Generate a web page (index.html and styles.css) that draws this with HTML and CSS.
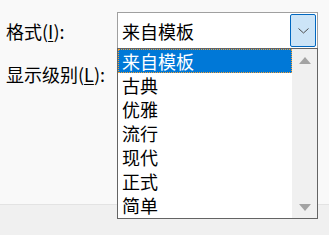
FILE: index.html
```html
<!DOCTYPE html>
<html lang="zh-CN">
<head>
  <meta charset="UTF-8">
  <title>样式</title>
  <link rel="stylesheet" href="styles.css">
</head>
<body>
  <div class="panel">
    <div class="row row-format">
      <label class="field-label">格式(<u>I</u>):</label>
      <div class="combo">
        <span class="combo-text">来自模板</span>
        <span class="combo-btn">
          <svg width="11" height="6" viewBox="0 0 11 6"><path d="M0.5 0.5 L5.5 5 L10.5 0.5" fill="none" stroke="#4d4d4d" stroke-width="1"/></svg>
        </span>
        <div class="dropdown">
          <ul class="options">
            <li class="selected">来自模板</li>
            <li>古典</li>
            <li>优雅</li>
            <li>流行</li>
            <li>现代</li>
            <li>正式</li>
            <li>简单</li>
          </ul>
          <div class="scrollbar">
            <span class="arrow up"></span>
            <span class="arrow down"></span>
          </div>
        </div>
      </div>
    </div>
    <div class="row row-level">
      <label class="field-label">显示级别(<u>L</u>):</label>
    </div>
  </div>
  <div class="footer"></div>
</body>
</html>
```

FILE: styles.css
```css
body {
  margin: 0;
  background-color: #f0f0f0;
  font-family: "Noto Sans CJK SC", "Noto Sans", sans-serif;
  font-size: 18px;
  color: #000;
}

.panel {
  height: 205px;
  box-sizing: border-box;
  padding: 12px 0 0 6px;
  background-color: #f9f9f9;
  border-bottom: 1px solid #e3e3e3;
}

.row {
  display: flex;
  align-items: center;
}

.row-format {
  height: 37px;
}

.row-level {
  height: 24px;
  margin-top: 13px;
}

.field-label {
  width: 111px;
  line-height: 24px;
}

.field-label u {
  text-underline-offset: 2px;
}

.combo {
  position: relative;
  width: 201px;
  height: 37px;
  box-sizing: border-box;
  border: 1px solid #a0a0a0;
  background-color: #fff;
  display: flex;
  align-items: center;
}

.combo-text {
  flex: 1;
  padding-left: 4px;
  line-height: 24px;
}

.combo-btn {
  width: 26px;
  height: 33px;
  box-sizing: border-box;
  margin-right: 1px;
  border: 1px solid #0067c0;
  border-radius: 2px;
  background-color: #cce4f7;
  display: flex;
  align-items: center;
  justify-content: center;
}

.dropdown {
  position: absolute;
  top: 35px;
  left: -1px;
  width: 201px;
  height: 171px;
  box-sizing: border-box;
  border: 1px solid #646464;
  background-color: #fff;
  display: flex;
}

.options {
  list-style: none;
  margin: 0;
  padding: 0;
  width: 174px;
}

.options li {
  height: 24px;
  line-height: 24px;
  padding-left: 4px;
}

.options li.selected {
  background-color: #0078d7;
  color: #fff;
  outline: 1px dotted #f7a030;
  outline-offset: -1px;
}

.scrollbar {
  flex: 1;
  background-color: #f0f0f0;
  position: relative;
}

.arrow {
  position: absolute;
  left: 7px;
  width: 0;
  height: 0;
  border-left: 6px solid transparent;
  border-right: 6px solid transparent;
}

.arrow.up {
  top: 8px;
  border-bottom: 7px solid #a3a3a3;
}

.arrow.down {
  bottom: 7px;
  border-top: 7px solid #a3a3a3;
}

.footer {
  height: 30px;
}
```
